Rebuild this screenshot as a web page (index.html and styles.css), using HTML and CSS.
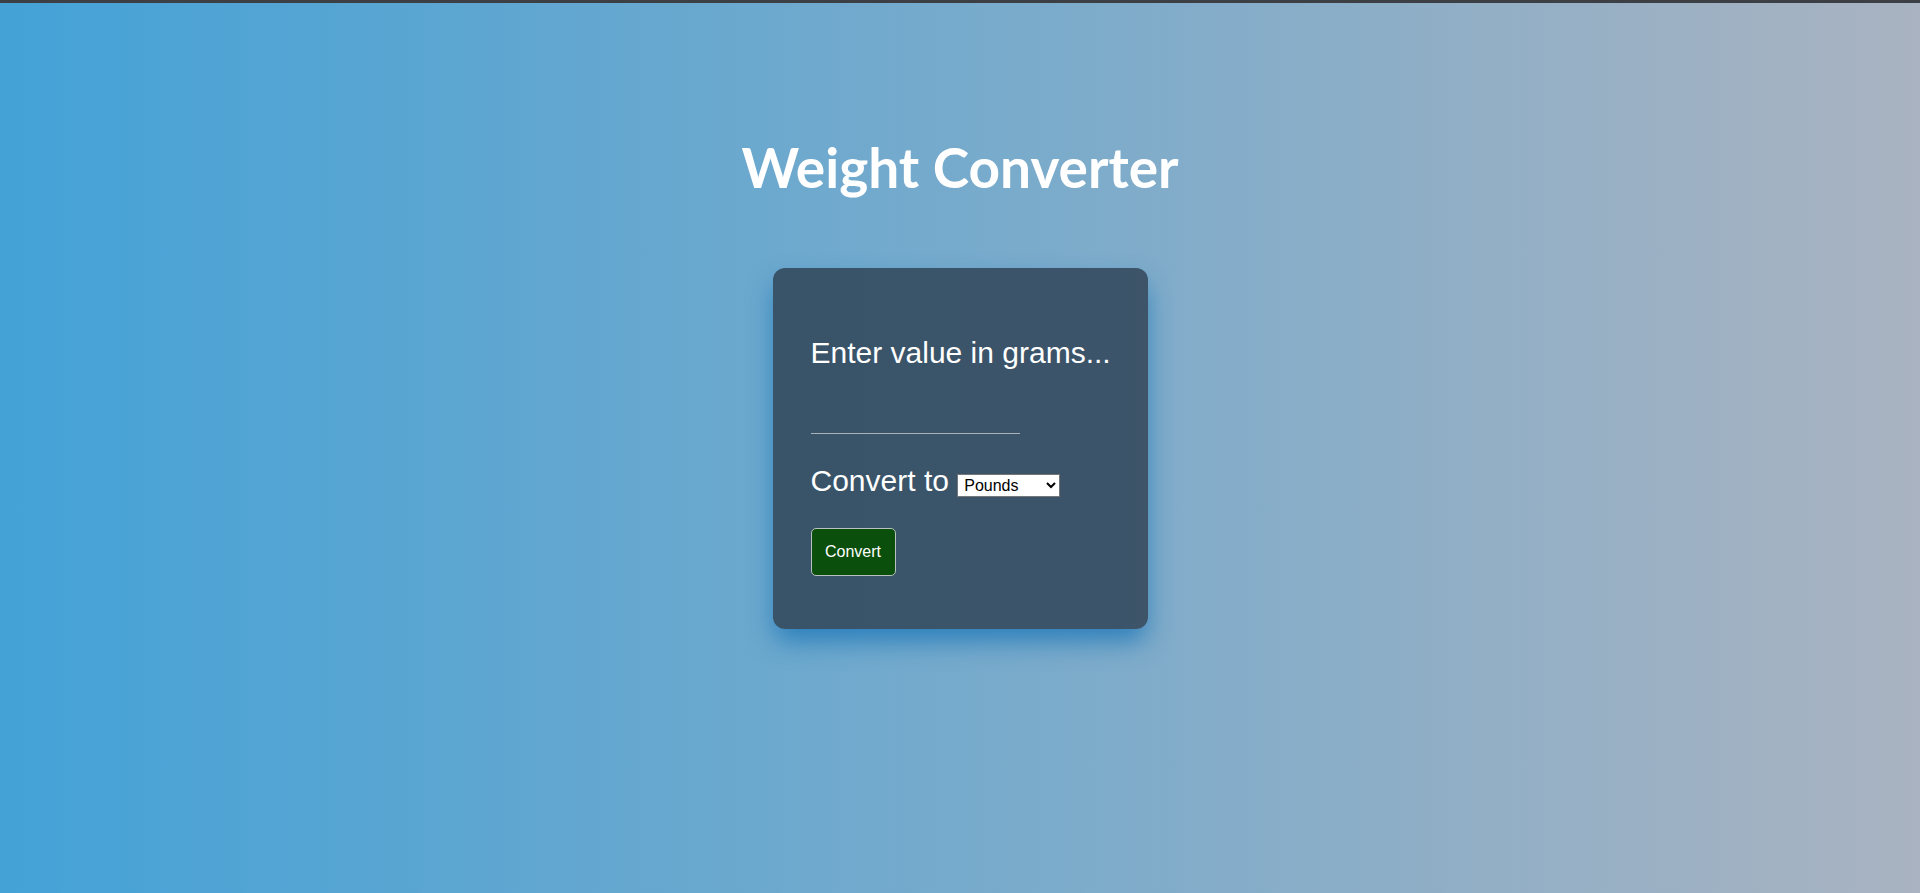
FILE: index.html
```html
<!DOCTYPE html>
<html lang="en">
<head>
<meta charset="utf-8">
<title>Weight Converter</title>
<link rel="stylesheet" href="styles.css">
</head>
<body>
<div class="topbar"></div>
<main class="page">
  <h1 class="title">Weight Converter</h1>
  <div class="card">
    <label class="prompt" for="grams">Enter value in grams...</label>
    <input class="value-input" id="grams" type="text">
    <div class="convert-row">
      <span>Convert to</span>
      <select class="unit-select">
        <option>Pounds</option>
        <option>Kilograms</option>
        <option>Ounces</option>
      </select>
    </div>
    <button class="convert-btn" type="button">Convert</button>
  </div>
</main>
</body>
</html>
```
FILE: styles.css
```css
html, body {
  margin: 0;
  padding: 0;
  height: 100%;
}
body {
  background: linear-gradient(to right, #44a2d7 0%, #a9b3c1 100%);
  font-family: "Liberation Sans", Arial, sans-serif;
  color: #ffffff;
  overflow: hidden;
}
.topbar {
  height: 3px;
  background: #3c4045;
}
.page {
  display: flex;
  flex-direction: column;
  align-items: center;
}
.title {
  margin: 131px 0 0;
  font-family: "Lato", "Open Sans", sans-serif;
  font-weight: 700;
  font-size: 55px;
  line-height: 66px;
  color: #ffffff;
}
.card {
  margin-top: 68px;
  width: 375px;
  box-sizing: border-box;
  padding: 38px 38px 53px;
  background: rgba(44, 62, 80, 0.8);
  border-radius: 12px;
  box-shadow: 0 14px 26px -2px rgba(30, 120, 185, 0.85);
  display: flex;
  flex-direction: column;
  align-items: flex-start;
}
.prompt {
  display: block;
  margin-top: 30px;
  font-size: 30px;
  line-height: 34px;
  color: #ffffff;
  white-space: nowrap;
}
.value-input {
  display: block;
  box-sizing: border-box;
  width: 209px;
  height: 64px;
  margin: 0;
  padding: 0;
  border: none;
  border-bottom: 1px solid #a9b3bb;
  background: transparent;
  color: #ffffff;
  font-family: "Liberation Sans", Arial, sans-serif;
  font-size: 30px;
  outline: none;
}
.convert-row {
  margin-top: 30px;
  font-size: 30px;
  line-height: 34px;
  white-space: nowrap;
}
.unit-select {
  width: 103px;
  height: 23px;
  font-family: "Liberation Sans", Arial, sans-serif;
  font-size: 16px;
  color: #000000;
  background: #ffffff;
  border: 1px solid #767676;
  border-radius: 0;
  vertical-align: baseline;
  padding: 0 0 0 2px;
}
.convert-btn {
  margin-top: 30px;
  width: 85px;
  height: 48px;
  background: #0a4f0b;
  color: #ffffff;
  border: 1px solid #b8c0c0;
  border-radius: 5px;
  font-family: "Liberation Sans", Arial, sans-serif;
  font-size: 16px;
  padding: 0;
}
```
